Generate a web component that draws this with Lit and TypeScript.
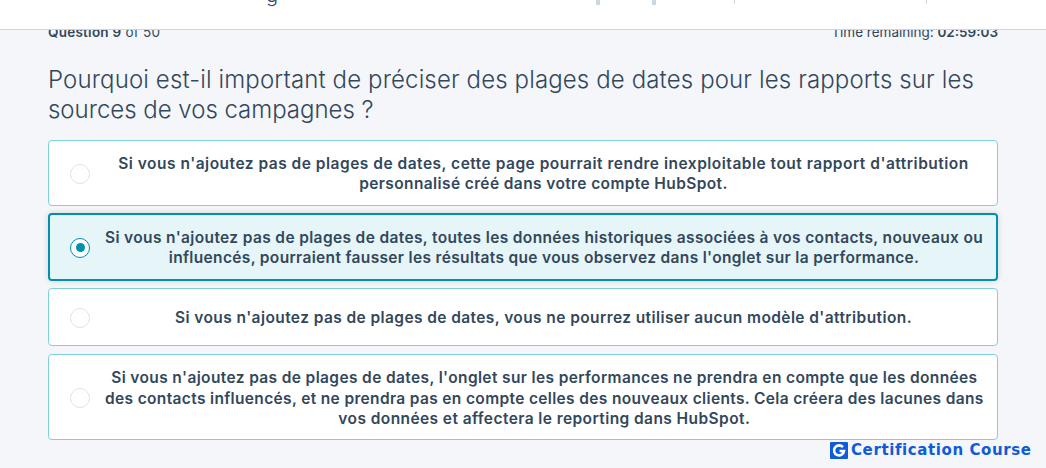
import { LitElement, html, css } from "lit";
import { customElement } from "lit/decorators.js";

type Line = [string, number];
const OPTIONS: { lines: Line[]; h: number; sel?: boolean }[] = [
  { lines: [["Si vous n'ajoutez pas de plages de dates, cette page pourrait rendre inexploitable tout rapport d'attribution", 0.5], ["personnalisé créé dans votre compte HubSpot.", 0.39]], h: 66 },
  { lines: [["Si vous n'ajoutez pas de plages de dates, toutes les données historiques associées à vos contacts, nouveaux ou", 0.36], ["influencés, pourraient fausser les résultats que vous observez dans l'onglet sur la performance.", 0.34]], h: 68, sel: true },
  { lines: [["Si vous n'ajoutez pas de plages de dates, vous ne pourrez utiliser aucun modèle d'attribution.", 0.41]], h: 58 },
  { lines: [["Si vous n'ajoutez pas de plages de dates, l'onglet sur les performances ne prendra en compte que les données", 0.37], ["des contacts influencés, et ne prendra pas en compte celles des nouveaux clients. Cela créera des lacunes dans", 0.35], ["vos données et affectera le reporting dans HubSpot.", 0.42]], h: 86 },
];

@customElement("app-root")
export class AppRoot extends LitElement {
  static styles = css`
    :host { display: block; width: 1046px; height: 468px; overflow: hidden; background: #f4f6fa; font-family: Inter, "Noto Sans", sans-serif; color: #33475b; position: relative; }
    .header { height: 29px; background: #fff; border-bottom: 1px solid #cbd6e2; position: relative; z-index: 1; }
    .tick { position: absolute; top: 0; background: #cbd6e2; }
    .descender { position: absolute; top: -15px; left: 266px; font-size: 20px; line-height: 20px; font-weight: 300; }
    .main { padding: 0 48px; }
    .meta { display: flex; justify-content: space-between; font-size: 13.5px; line-height: 18px; margin-top: -7px; font-weight: 400; }
    .meta b { font-weight: 600; }
    .q { letter-spacing: 0.25px; }
    h1 { margin: 24px 0 15px; font-size: 24px; line-height: 30px; letter-spacing: 0.13px; font-weight: 300; white-space: nowrap; }
    .l2 { letter-spacing: -0.02px; }
    .list { display: flex; flex-direction: column; gap: 7px; }
    .opt { box-sizing: border-box; display: flex; align-items: center; background: #fff; border: 1px solid #7fd1de; border-radius: 4px; padding: 0 15px 0 21px; }
    .opt:last-child { margin-top: 1px; }
    .opt.sel { background: #e5f5f8; border: 2px solid #0091ae; padding: 0 14px 0 20px; box-shadow: 0 0 6px rgba(0,0,0,.14); }
    .radio { flex: none; box-sizing: border-box; width: 20px; height: 20px; margin-top: 1px; border-radius: 50%; border: 1.5px solid #dbe3ec; background: #fff; display: flex; align-items: center; justify-content: center; }
    .sel .radio { border: 1.5px solid #0091ae; }
    .dot { width: 9px; height: 9px; border-radius: 50%; background: #0091ae; }
    .txt { flex: 1; text-align: center; font-size: 15.5px; line-height: 20.5px; font-weight: 600; padding: 2px 0 0 15px; white-space: nowrap; }
    .opt:last-child .txt { padding-top: 4px; }
    .brand { position: absolute; left: 830px; top: 441px; display: flex; align-items: center; gap: 3px; color: #0f5bd8; font-family: "DejaVu Sans", sans-serif; font-size: 15px; letter-spacing: 0.6px; font-weight: 700; line-height: 18px; }
    .brand svg { display: block; }
  `;
  render() {
    return html`
      <div class="header">
        <span class="descender">g</span>
        <span class="tick" style="left:596px;width:4px;height:5px"></span>
        <span class="tick" style="left:652px;width:4px;height:5px"></span>
        <span class="tick" style="left:734px;width:1px;height:4px"></span>
        <span class="tick" style="left:926px;width:1px;height:4px"></span>
      </div>
      <div class="main">
        <div class="meta"><span class="q"><b>Question 9</b> of 50</span><span>Time remaining: <b>02:59:03</b></span></div>
        <h1>Pourquoi est-il important de préciser des plages de dates pour les rapports sur les<br><span class="l2">sources de vos campagnes ?</span></h1>
        <div class="list">
          ${OPTIONS.map(o => html`
            <div class="opt ${o.sel ? "sel" : ""}" style="height:${o.h}px">
              <span class="radio">${o.sel ? html`<span class="dot"></span>` : ""}</span>
              <div class="txt">${o.lines.map(([t, ls]) => html`<div style="letter-spacing:${ls}px">${t}</div>`)}</div>
            </div>`)}
        </div>
      </div>
      <div class="brand">
        <svg width="18" height="17" viewBox="0 0 18 17"><rect width="18" height="17" rx="1" fill="#0f5bd8"/><path d="M12.9 5.2A5 5 0 1 0 14 9H9.5" fill="none" stroke="#fff" stroke-width="2.6"/></svg>
        <span>Certification Course</span>
      </div>
    `;
  }
}
